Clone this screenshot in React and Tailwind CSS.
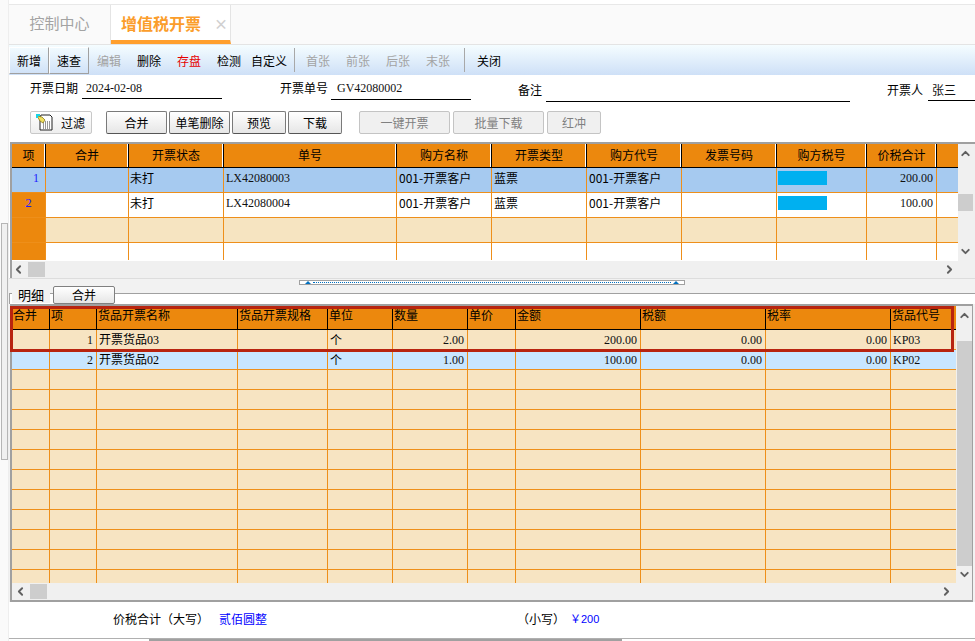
import { ChevronLeft, ChevronRight, ChevronUp, ChevronDown } from "lucide-react";

const cjk = "font-['Noto_Sans_CJK_SC','Liberation_Sans',sans-serif]";
const num = "font-['Liberation_Serif','Noto_Sans_CJK_SC',serif]";

const topCols = [34, 83, 95, 173, 95, 95, 95, 95, 90, 70, 21];
const topHead = ["项", "合并", "开票状态", "单号", "购方名称", "开票类型", "购方代号", "发票号码", "购方税号", "价税合计", ""];
const bottomCols = [38, 47, 141, 90, 65, 75, 48, 125, 125, 125, 65];
const bottomHead = ["合并", "项", "货品开票名称", "货品开票规格", "单位", "数量", "单价", "金额", "税额", "税率", "货品代号"];

function ToolBtn({ label, active, tone }) {
  const color = tone === "off" ? "text-[#a3a3a3]" : tone === "red" ? "text-[#e60000]" : "text-black";
  return (
    <div className={`w-10 h-[27px] pt-px flex items-center justify-center text-xs ${color} ${active ? "border border-[#a0a0a0] border-t-white border-l-white" : ""}`}>
      {label}
    </div>
  );
}

function Btn({ label, w, off }) {
  return (
    <div
      className={`h-[23px] flex items-center justify-center text-xs rounded-[2px] border ${w} ${
        off
          ? "border-[#c4c4c4] bg-[#f0f0f0] text-[#808080]"
          : "border-[#7a7a7a] border-b-[#555] bg-gradient-to-b from-white to-[#e6e6e6] text-black"
      }`}
    >
      {label}
    </div>
  );
}

function Field({ label, value, labelClass, lineClass, serif, gap }) {
  return (
    <div className={`flex items-start ${gap}`}>
      <div className={`${labelClass} text-xs text-black`}>{label}</div>
      <div className={`${lineClass} border-b border-black text-xs pl-[4px] text-[#111] ${serif ? num : ""}`}>{value}</div>
    </div>
  );
}

function HBar({ thumb, leftArrow, rightArrow }) {
  return (
    <div className="h-[17px] bg-[#f0f0f0] flex items-center relative">
      <div className={leftArrow}><ChevronLeft size={13} strokeWidth={3.5} className="text-[#606060]" /></div>
      <div className={`w-[17px] h-[15px] bg-[#cdcdcd] ${thumb}`} />
      <div className={`ml-auto ${rightArrow}`}><ChevronRight size={13} strokeWidth={3.5} className="text-[#606060]" /></div>
    </div>
  );
}

function Cell({ w, className, children }) {
  return (
    <div style={{ width: w }} className={`shrink-0 h-full overflow-hidden whitespace-nowrap ${className}`}>
      {children}
    </div>
  );
}

function TopRow({ bg, no, noBg, status, code, amount, tall }) {
  const line = "border-r border-[#ee8f1a]";
  return (
    <div className={`flex text-xs ${tall ? "h-[25px] border-b border-[#ee8f1a]" : "h-[17px]"} ${bg}`}>
      <Cell w={topCols[0]} className={`${line} ${noBg} text-[#1a1aff] ${num} leading-[20px] ${no === "1" ? "text-right pr-[6px]" : "text-center text-[13px]"}`}>{no}</Cell>
      <Cell w={topCols[1]} className={line} />
      <Cell w={topCols[2]} className={`${line} pl-[1px] leading-[20px] text-black`}>{status}</Cell>
      <Cell w={topCols[3]} className={`${line} pl-[2px] leading-[20px] text-[#111] ${num}`}>{code}</Cell>
      <Cell w={topCols[4]} className={`${line} pl-[2px] leading-[20px] text-black`}>{code && "001-开票客户"}</Cell>
      <Cell w={topCols[5]} className={`${line} pl-[2px] leading-[20px] text-black`}>{code && "蓝票"}</Cell>
      <Cell w={topCols[6]} className={`${line} pl-[2px] leading-[20px] text-black`}>{code && "001-开票客户"}</Cell>
      <Cell w={topCols[7]} className={line} />
      <Cell w={topCols[8]} className={`${line} pt-[3px] pl-[1px]`}>{code && <div className="w-[49px] h-[14px] bg-[#00b0f0]" />}</Cell>
      <Cell w={topCols[9]} className={`${line} pr-[3px] text-right leading-[20px] text-[#111] ${num}`}>{amount}</Cell>
      <Cell w={topCols[10]} />
    </div>
  );
}

function BottomRow({ row, bg }) {
  const line = "border-r border-[#ee8f1a]";
  const serifRight = `${line} ${num} text-right pr-[3px] leading-[20px] text-[#111]`;
  return (
    <div className={`flex h-5 text-xs border-b border-[#ee8f1a] ${bg}`}>
      <Cell w={bottomCols[0]} className={line} />
      <Cell w={bottomCols[1]} className={serifRight}>{row?.no}</Cell>
      <Cell w={bottomCols[2]} className={`${line} ${num} pl-[2px] leading-[20px] text-black`}>{row?.name}</Cell>
      <Cell w={bottomCols[3]} className={line} />
      <Cell w={bottomCols[4]} className={`${line} pl-[2px] leading-[20px] text-black`}>{row && "个"}</Cell>
      <Cell w={bottomCols[5]} className={serifRight}>{row?.qty}</Cell>
      <Cell w={bottomCols[6]} className={line} />
      <Cell w={bottomCols[7]} className={serifRight}>{row?.amount}</Cell>
      <Cell w={bottomCols[8]} className={serifRight}>{row && "0.00"}</Cell>
      <Cell w={bottomCols[9]} className={serifRight}>{row && "0.00"}</Cell>
      <Cell w={bottomCols[10]} className={`${num} pl-[2px] leading-[20px] text-[#111]`}>{row?.code}</Cell>
    </div>
  );
}

const emptyRows = Array.from({ length: 11 }, (_, i) => i);

export default function App() {
  return (
    <div className={`w-[975px] h-[641px] overflow-hidden bg-white flex ${cjk}`}>
      {/* left gutter */}
      <div className="w-[9px] shrink-0 bg-[#fafafa] border-r border-[#eeeeee] pt-[223px]">
        <div className="ml-[1px] w-[7px] h-[237px] border border-[#b5b5b5] bg-[#f0f0f0]" />
      </div>

      <div className="flex-1 min-w-0 flex flex-col">
        {/* tabs */}
        <div className="h-[5px] border-b border-[#e8e8e8]" />
        <div className="h-[40px] flex bg-[#fafafa] border-b border-[#e4e4e4]">
          <div className="w-[102px] flex items-center justify-center pb-[3px] text-[15px] text-[#a3a3a3] border-r border-[#e4e4e4]">控制中心</div>
          <div className="w-[120px] bg-white border-b-[4px] border-[#ff9f2d] border-r border-r-[#e4e4e4] flex items-center pl-[10px] gap-[13px] whitespace-nowrap">
            <span className="text-[16px] font-bold text-[#fb9d2b]">增值税开票</span>
            <span className="text-[14px] leading-none font-bold text-[#d0d0d0]">×</span>
          </div>
        </div>

        {/* toolbar */}
        <div className="h-[30px] flex items-center bg-gradient-to-b from-[#f5fdff] to-[#cee0f7]">
          <ToolBtn label="新增" active />
          <ToolBtn label="速查" active />
          <ToolBtn label="编辑" tone="off" />
          <ToolBtn label="删除" />
          <ToolBtn label="存盘" tone="red" />
          <ToolBtn label="检测" />
          <ToolBtn label="自定义" />
          <div className="w-px h-6 bg-[#a8a8a8] ml-[5px] mr-[3px]" />
          <ToolBtn label="首张" tone="off" />
          <ToolBtn label="前张" tone="off" />
          <ToolBtn label="后张" tone="off" />
          <ToolBtn label="末张" tone="off" />
          <div className="w-px h-6 bg-[#a8a8a8] ml-[6px] mr-[4px]" />
          <ToolBtn label="关闭" />
        </div>

        {/* form row */}
        <div className="h-[35px] flex items-start pl-[21px]">
          <Field label="开票日期" value="2024-02-08" labelClass="w-[52px] leading-[26px]" lineClass="w-[140px] h-[24px] leading-[26px]" serif gap="mr-[58px]" />
          <Field label="开票单号" value="GV42080002" labelClass="w-[51px] leading-[26px]" lineClass="w-[140px] h-[25px] leading-[26px] pl-[6px]" serif gap="mr-[47px]" />
          <Field label="备注" value="" labelClass="w-[28px] leading-[30px]" lineClass="w-[304px] h-[27px]" gap="mr-[37px]" />
          <Field label="开票人" value="张三" labelClass="w-[41px] leading-[29px]" lineClass="w-[47px] h-[26px] leading-[30px]" />
        </div>

        {/* buttons row */}
        <div className="h-[32px] flex items-start pl-[21px] pt-[1px]">
          <div className="w-[62px] h-[23px] flex items-center gap-[8px] pl-[5px] text-xs text-black rounded-[2px] border border-[#c8c8c8] bg-gradient-to-b from-white to-[#eeeeee] mr-[14px]">
            <svg width="17" height="17" viewBox="0 0 17 17" className="shrink-0">
              <path d="M5 1h9l2 2v13H4V3z" fill="#fff" stroke="#222" strokeWidth="1" />
              <path d="M7 8h7M7 10h7M7 12h7M7 14h7" stroke="#333" strokeWidth="1" strokeDasharray="1 1" />
              <path d="M1 2l5 1 3 3-2 3-3-2z" fill="#f0e060" stroke="#8a7a20" strokeWidth="0.8" />
              <path d="M0 0h4v2H2v2H0z" fill="#19d3e6" />
            </svg>
            过滤
          </div>
          <div className="flex gap-[2px]">
            <Btn label="合并" w="w-[61px]" />
            <Btn label="单笔删除" w="w-[61px]" />
            <Btn label="预览" w="w-[54px]" />
            <Btn label="下载" w="w-[54px]" />
          </div>
          <div className="flex gap-[3px] ml-[17px]">
            <Btn label="一键开票" w="w-[91px]" off />
            <Btn label="批量下载" w="w-[91px]" off />
            <Btn label="红冲" w="w-[54px]" off />
          </div>
        </div>

        {/* top grid */}
        <div className="ml-[1px] border-t-[2px] border-l-[2px] border-[#a0a0a0] h-[136px] flex flex-col">
          <div className="h-[117px] flex">
            <div className="w-[946px] shrink-0 bg-white overflow-hidden">
              <div className="flex h-[24px] bg-[#ec880d] border-b border-black text-xs text-black">
                {topHead.map((h, i) => (
                  <Cell key={i} w={topCols[i]} className={`text-center leading-[22px] ${i < 10 ? "border-r border-black shadow-[inset_-1px_0_0_#fff]" : ""}`}>{h}</Cell>
                ))}
              </div>
              <TopRow tall bg="bg-[#a6caf0]" no="1" noBg="" status="未打" code="LX42080003" amount="200.00" />
              <TopRow tall bg="bg-white" no="2" noBg="bg-[#ec880d]" status="未打" code="LX42080004" amount="100.00" />
              <TopRow tall bg="bg-[#f6e4c1]" noBg="bg-[#ec880d]" />
              <TopRow bg="bg-white" noBg="bg-[#ec880d]" />
            </div>
            <div className="flex-1 bg-[#f0f0f0] pr-[2px] flex flex-col items-center pt-[3px]">
              <ChevronUp size={13} strokeWidth={3.5} className="text-[#606060]" />
              <div className="w-[15px] h-[17px] bg-[#cdcdcd] mt-[34px]" />
              <ChevronDown size={13} strokeWidth={3.5} className="text-[#606060] mt-[34px]" />
            </div>
          </div>
          <HBar thumb="ml-[3px]" leftArrow="ml-0" rightArrow="mr-[19px]" />
        </div>

        {/* splitter */}
        <div className="h-[7px] bg-[#f2f2f2] border-t border-[#dddddd] pl-[290px] pt-px">
          <div className="w-[386px] h-[5px] border border-[#a0a0a0] bg-white flex items-center justify-between px-[5px]">
            <span className="w-0 h-0 border-x-[3px] border-x-transparent border-b-[3px] border-b-[#0070c0]" />
            <span className="flex-1 mx-[2px] border-t border-dotted border-[#0070c0]" />
            <span className="w-0 h-0 border-x-[3px] border-x-transparent border-b-[3px] border-b-[#0070c0]" />
          </div>
        </div>

        {/* detail panel */}
        <div className="h-[317px] bg-[#f2f2f2] relative flex flex-col">
          <div className="h-[19px] flex items-start relative">
            <div className="absolute left-0 right-0 top-[8px] h-[11px] bg-white border-t border-l border-[#a0a0a0]" />
            <div className="relative ml-[3px] w-[38px] h-[18px] bg-[#f2f2f2] text-center text-[13px] leading-[20px] text-black">明细</div>
            <div className="relative ml-[3px] mt-px w-[62px] h-[18px] flex items-center justify-center text-xs text-black rounded-[2px] border border-[#808080] bg-gradient-to-b from-white to-[#e6e6e6]">合并</div>
          </div>

          <div className="flex-1 min-h-0 ml-[1px] mr-[2px] border-t-[2px] border-l-[2px] border-b-[2px] border-r border-[#a0a0a0] flex flex-col">
            <div className="flex-1 min-h-0 flex">
              <div className="w-[944px] shrink-0 overflow-hidden bg-[#f7e4c2]">
                <div className="flex h-[24px] bg-[#ec880d] border-b border-black text-xs text-black">
                  {bottomHead.map((h, i) => (
                    <Cell key={i} w={bottomCols[i]} className={`pl-[1px] leading-[18px] ${i < 10 ? "border-r border-black" : ""}`}>{h}</Cell>
                  ))}
                </div>
                <BottomRow bg="bg-[#f7e4c2]" row={{ no: "1", name: "开票货品03", qty: "2.00", amount: "200.00", code: "KP03" }} />
                <BottomRow bg="bg-[#c8e6ff]" row={{ no: "2", name: "开票货品02", qty: "1.00", amount: "100.00", code: "KP02" }} />
                {emptyRows.map((i) => (
                  <BottomRow key={i} bg="bg-[#f7e4c2]" />
                ))}
              </div>
              <div className="flex-1 bg-[#f0f0f0] flex flex-col items-center pt-[3px]">
                <ChevronUp size={13} strokeWidth={3.5} className="text-[#606060]" />
                <div className="w-[15px] h-[225px] bg-[#cdcdcd] mt-[19px]" />
                <ChevronDown size={13} strokeWidth={3.5} className="text-[#606060] mt-[2px]" />
              </div>
            </div>
            <HBar thumb="ml-[3px]" leftArrow="ml-[2px]" rightArrow="mr-[19px]" />
          </div>

          {/* red highlight over the first detail row */}
          <div className="absolute left-[1px] top-[21px] w-[944px] h-[46px] border-[3px] border-[#b8240f] pointer-events-none" />
        </div>

        {/* footer totals */}
        <div className="flex-1 min-h-0 flex flex-col">
          <div className="flex-1 flex items-start pt-[9px] pl-[104px] text-xs">
            <span className="text-black w-[106px]">价税合计（大写）</span>
            <span className="text-[#0000ff] w-[298px]">贰佰圆整</span>
            <span className="text-black w-[53px]">（小写）</span>
            <span className="text-[#0000ff] text-[11px] leading-[17px] font-['Liberation_Sans','Noto_Sans_CJK_SC',sans-serif]">￥200</span>
          </div>
          <div className="h-px bg-[#b0b0b0]" />
          <div className="h-[2px] pl-[140px]">
            <div className="w-[473px] h-full bg-[#a0a0a0]" />
          </div>
        </div>
      </div>
    </div>
  );
}
